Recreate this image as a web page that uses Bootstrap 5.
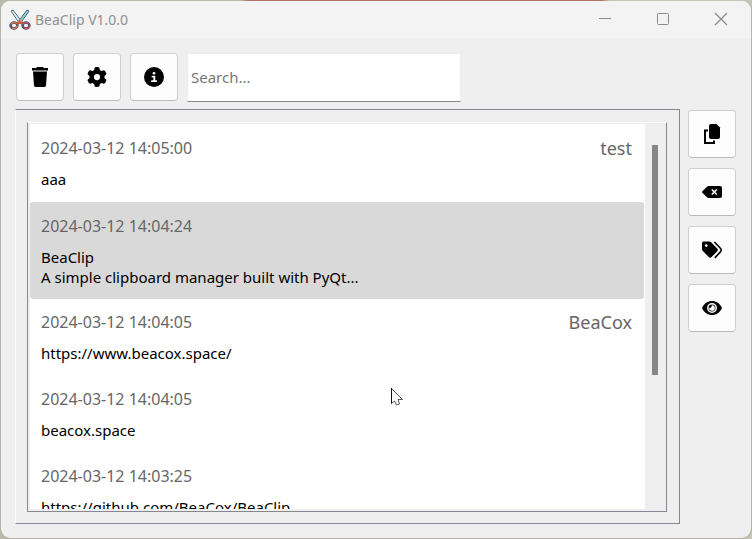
<!DOCTYPE html>
<html lang="en">
<head>
<meta charset="utf-8">
<meta name="viewport" content="width=device-width, initial-scale=1">
<title>BeaClip V1.0.0</title>
<link href="https://cdn.jsdelivr.net/npm/bootstrap@5.3.0/dist/css/bootstrap.min.css" rel="stylesheet">
<style>
  body { font-family: "Noto Sans", "Open Sans", sans-serif; font-size: 15px; line-height: 20px; background: linear-gradient(90deg, #b9baa8 0 32%, #b27462 33% 80%, #c4c5b3 81%); }
  .app-window { height: 100vh; border: 1px solid #b4b5a6; border-top-color: transparent; border-radius: 10px; background: #efefef; background-clip: padding-box; }
  .title-bar { height: 37px; padding-right: 1px; background: #f3f3f3; color: #909090; }
  .title-text { font-size: 14px; }
  .caption-btn { width: 58px; height: 35px; margin-bottom: 2px; color: #8a8a8a; }
  .workspace { padding: 15px 14px 14px; }
  .tool-row { gap: 9px; padding-left: 1px; margin-bottom: 7px; }
  .tool-btn { width: 48px; height: 48px; background: #fdfdfd; border: 1px solid #d0d0d0; border-bottom-color: #bcbcbc; border-radius: 4px; color: #000; }
  .tool-btn:hover { background: #f4f4f4; border-color: #bcbcbc; }
  .search-box { width: 274px; height: 49px; padding: 0 3px 2px; border: 1px solid #ececec; border-bottom-color: #858585; border-radius: 0; font-size: 15px; }
  .search-box::placeholder { color: #777; }
  .outer-frame { padding: 12px 12px 11px 11px; border: 1px solid #868790; border-left-color: #fbfbfb; }
  .inner-frame { padding: 1px; border: 1px solid #868790; border-top-color: #fff; }
  .clip-list { padding: 1px 1px 0 0; margin: 0 0 1px 1px; background: #fff; }
  .clip-item { padding: 10px 12px 13px 11px; color: #000; background: #fff; border: 0; border-radius: 0; flex: none; }
  .clip-item.selected { padding-top: 11px; padding-bottom: 12px; background: #d9d9d9; border-radius: 3px; }
  .clip-head { height: 26px; margin-bottom: 8px; color: #666; font-size: 16px; }
  .clip-tag { font-size: 18px; }
  .scroll-track { width: 20px; padding: 21px 7px 0; }
  .scroll-thumb { width: 6px; height: 63%; background: #868686; }
  .side-col { gap: 10px; padding: 1px 1px 0 8px; }
  .pointer { left: 389px; top: 386px; }
</style>
<script src="https://cdn.jsdelivr.net/npm/bootstrap@5.3.0/dist/js/bootstrap.bundle.min.js"></script>
</head>
<body>
<div class="app-window d-flex flex-column overflow-hidden position-relative">
  <header class="title-bar d-flex align-items-center flex-shrink-0">
    <svg class="ms-2 me-1" width="22" height="22" viewBox="0 0 22 22" aria-hidden="true">
      <path d="M2 2l2-1 9 12-2 2z" fill="#e4eef4" stroke="#52657a"/>
      <path d="M20 2l-2-1-9 12 2 2z" fill="#8fd0d2" stroke="#4d6b7a"/>
      <path d="M7 14l4-3 4 3-2 2-2-2-2 2z" fill="#ee5a32"/>
      <ellipse cx="5" cy="16.500" rx="3.400" ry="3" fill="#f3f3f3" stroke="#4d5870" stroke-width="2.600"/>
      <ellipse cx="5" cy="16.500" rx="3.400" ry="3" fill="none" stroke="#ef7a38" stroke-width="1.200" stroke-dasharray="7 4"/>
      <ellipse cx="17" cy="16.500" rx="3.400" ry="3" fill="#f3f3f3" stroke="#4d5870" stroke-width="2.600"/>
      <ellipse cx="17" cy="16.500" rx="3.400" ry="3" fill="none" stroke="#e34c54" stroke-width="1.200" stroke-dasharray="7 4"/>
    </svg>
    <span class="title-text me-auto">BeaClip V1.0.0</span>
    <button class="caption-btn btn p-0 border-0 rounded-0" aria-label="Minimize"><svg class="d-block m-auto" width="14" height="14" fill="none" stroke="currentColor"><path d="M1 6.500h12"/></svg></button>
    <button class="caption-btn btn p-0 border-0 rounded-0" aria-label="Maximize"><svg class="d-block m-auto" width="14" height="14" fill="none" stroke="currentColor"><rect x="1.500" y="1.500" width="11" height="11" rx="1"/></svg></button>
    <button class="caption-btn btn p-0 border-0 rounded-0" aria-label="Close"><svg class="d-block m-auto" width="14" height="14" fill="none" stroke="currentColor" stroke-width="1.200"><path d="M1 1l12 12M13 1L1 13"/></svg></button>
  </header>

  <main class="workspace d-flex flex-column flex-grow-1 overflow-hidden">
    <div class="tool-row d-flex flex-shrink-0">
      <button class="tool-btn btn p-0" aria-label="Clear all"><svg class="d-block m-auto" width="16" height="20" viewBox="0 0 16 20" fill="currentColor"><path d="M5 0h6l.8 1H16v2.500H0V1h4.200zM1 4.500h14L14 18.500a1.600 1.600 0 0 1-1.600 1.500H3.600A1.600 1.600 0 0 1 2 18.500z"/></svg></button>
      <button class="tool-btn btn p-0" aria-label="Settings"><svg class="d-block m-auto" width="20" height="20" viewBox="0 0 512 512" fill="currentColor"><path d="M495.900 166.600c3.200 8.700 .5 18.400-6.400 24.600l-43.300 39.400c1.100 8.300 1.700 16.800 1.700 25.400s-.6 17.100-1.700 25.400l43.300 39.400c6.900 6.200 9.600 15.900 6.400 24.600c-4.400 11.900-9.700 23.300-15.800 34.300l-4.700 8.100c-6.600 11-14 21.400-22.100 31.200c-5.900 7.200-15.700 9.600-24.500 6.800l-55.700-17.700c-13.400 10.300-28.200 18.900-44 25.400l-12.500 57.100c-2 9.100-9 16.300-18.200 17.800c-13.800 2.300-28 3.500-42.500 3.500s-28.700-1.200-42.500-3.500c-9.200-1.500-16.200-8.700-18.200-17.800l-12.500-57.100c-15.800-6.500-30.600-15.100-44-25.400L83.100 425.900c-8.800 2.800-18.600 .3-24.500-6.800c-8.100-9.800-15.500-20.200-22.100-31.200l-4.700-8.100c-6.100-11-11.400-22.400-15.800-34.300c-3.200-8.700-.5-18.400 6.400-24.600l43.300-39.400C64.600 273.100 64 264.600 64 256s.6-17.100 1.700-25.400L22.400 191.200c-6.900-6.200-9.600-15.900-6.400-24.600c4.400-11.900 9.700-23.300 15.800-34.300l4.700-8.100c6.600-11 14-21.400 22.100-31.200c5.900-7.200 15.700-9.600 24.500-6.800l55.700 17.700c13.400-10.300 28.200-18.900 44-25.400l12.500-57.100c2-9.100 9-16.300 18.200-17.800C227.300 1.200 241.500 0 256 0s28.700 1.200 42.500 3.500c9.200 1.500 16.200 8.700 18.200 17.800l12.500 57.100c15.800 6.500 30.600 15.100 44 25.400l55.700-17.700c8.800-2.800 18.600-.3 24.500 6.800c8.100 9.800 15.500 20.200 22.100 31.200l4.700 8.100c6.100 11 11.400 22.400 15.800 34.300zM256 336a80 80 0 1 0 0-160 80 80 0 1 0 0 160z"/></svg></button>
      <button class="tool-btn btn p-0" aria-label="About"><svg class="d-block m-auto" width="20" height="20" viewBox="0 0 512 512"><circle cx="256" cy="256" r="256" fill="currentColor"/><circle cx="256" cy="160" r="34" fill="#fdfdfd"/><path d="M216 246h48v114M202 360h112" fill="none" stroke="#fdfdfd" stroke-width="48" stroke-linecap="round"/></svg></button>
      <input class="search-box form-control" type="text" placeholder="Search..." aria-label="Search">
    </div>

    <div class="d-flex flex-grow-1 overflow-hidden">
      <section class="outer-frame d-flex flex-grow-1 overflow-hidden">
        <div class="inner-frame d-flex flex-grow-1 overflow-hidden">
          <div class="clip-list list-group rounded-0 flex-grow-1 overflow-hidden">
            <button class="clip-item list-group-item text-start"><span class="clip-head d-flex justify-content-between align-items-center"><span>2024-03-12 14:05:00</span><span class="clip-tag">test</span></span><span class="d-block">aaa</span></button>
            <button class="clip-item selected list-group-item text-start"><span class="clip-head d-flex align-items-center">2024-03-12 14:04:24</span><span class="d-block">BeaClip<br>A simple clipboard manager built with PyQt...</span></button>
            <button class="clip-item list-group-item text-start"><span class="clip-head d-flex justify-content-between align-items-center"><span>2024-03-12 14:04:05</span><span class="clip-tag">BeaCox</span></span><span class="d-block">https://www.beacox.space/</span></button>
            <button class="clip-item list-group-item text-start"><span class="clip-head d-flex align-items-center">2024-03-12 14:04:05</span><span class="d-block">beacox.space</span></button>
            <button class="clip-item list-group-item text-start"><span class="clip-head d-flex align-items-center">2024-03-12 14:03:25</span><span class="d-block">https://github.com/BeaCox/BeaClip</span></button>
          </div>
          <div class="scroll-track flex-shrink-0"><div class="scroll-thumb"></div></div>
        </div>
      </section>

      <aside class="side-col d-flex flex-column flex-shrink-0">
        <button class="tool-btn btn p-0" aria-label="Copy"><svg class="d-block m-auto" width="18" height="20" viewBox="0 0 18 20"><path d="M5 6.500H2V19h9v-2.500" fill="none" stroke="currentColor" stroke-width="2"/><path d="M8 0h5.500L17 3.500V13a2 2 0 0 1-2 2H8a2 2 0 0 1-2-2V2a2 2 0 0 1 2-2z" fill="currentColor"/></svg></button>
        <button class="tool-btn btn p-0" aria-label="Delete"><svg class="d-block m-auto" width="20" height="20" viewBox="0 0 20 20"><path d="M.4 9.200L5.200 4.600A2 2 0 0 1 6.600 4H18a2 2 0 0 1 2 2v8a2 2 0 0 1-2 2H6.600a2 2 0 0 1-1.400-.6L.4 10.800a1.100 1.100 0 0 1 0-1.600z" fill="currentColor"/><path d="M9.800 7.500l5 5M14.800 7.500l-5 5" stroke="#fdfdfd" stroke-width="1.600"/></svg></button>
        <button class="tool-btn btn p-0" aria-label="Tags"><svg class="d-block m-auto" width="20" height="20" viewBox="0 0 20 20"><path d="M0 3a1.500 1.500 0 0 1 1.500-1.500H7.500a2 2 0 0 1 1.400.6l6.300 6.300a2 2 0 0 1 0 2.800l-5.600 5.900a2 2 0 0 1-2.800 0L.6 10.700A2 2 0 0 1 0 9.300z" fill="currentColor"/><circle cx="4.300" cy="5.600" r="1.300" fill="#fdfdfd"/><path d="M12.400 2l6 6.200a2.600 2.600 0 0 1 0 3.700l-5.600 6" fill="none" stroke="currentColor" stroke-width="1.600"/></svg></button>
        <button class="tool-btn btn p-0" aria-label="Show"><svg class="d-block m-auto" width="20" height="20" viewBox="0 0 20 20"><path d="M0 10C2 5.600 5.600 3 10 3s8 2.600 10 7c-2 4.400-5.600 7-10 7S2 14.400 0 10z" fill="currentColor"/><circle cx="10" cy="10" r="4.200" fill="none" stroke="#fdfdfd" stroke-width="1.500"/><path d="M7.200 9.700A2 2 0 0 0 9.700 7.200 2.800 2.800 0 1 1 7.200 9.700z" fill="#fdfdfd"/></svg></button>
      </aside>
    </div>
  </main>

  <svg class="pointer position-absolute" width="14" height="20" viewBox="0 0 14 20" aria-hidden="true"><path d="M1.500 1.500v15l3-2.500 2 4 3-1-1.500-4.500h4.500z" fill="#fff" stroke="#555"/><path d="M1.500 1v15.500" stroke="#111"/></svg>
</div>
</body>
</html>
